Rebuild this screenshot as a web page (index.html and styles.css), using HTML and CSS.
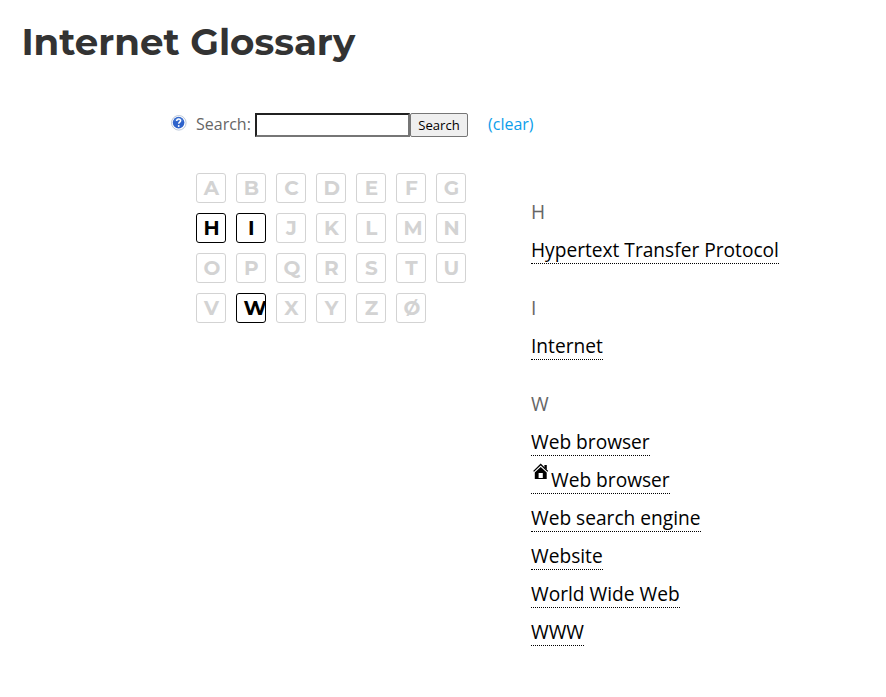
FILE: index.html
```html
<!DOCTYPE html>
<html lang="en">
<head>
    <meta charset="UTF-8">
    <meta name="viewport" content="width=device-width, initial-scale=1.0">
    <title>Internet Glossary</title>
    <link rel="stylesheet" href="styles.css">
</head>
<body>
    <h1>Internet Glossary</h1>

    <form class="search">
        <svg class="help" width="16" height="16" viewBox="0 0 16 16">
            <circle cx="7.8" cy="7.8" r="7.3" fill="#fff" stroke="#b4c2d6" stroke-width="0.9"/>
            <circle cx="7.6" cy="7.6" r="5.8" fill="#2f63cb"/>
            <path d="M3 6.3a4.8 4.8 0 0 1 9.2 0z" fill="#5d91e0" opacity="0.5"/>
            <path d="M5.7 6c.1-2.6 4-2.4 3.9-.2 0 1.4-1.8 1.4-1.9 3" fill="none" stroke="#fff" stroke-width="1.5"/>
            <circle cx="7.7" cy="11" r="0.95" fill="#fff"/>
        </svg>
        <label for="term">Search:</label>
        <input type="text" id="term">
        <button type="submit">Search</button>
        <a href="#" class="clear">(clear)</a>
    </form>

    <div class="glossary">
        <div class="letters">
            <span>A</span>
            <span>B</span>
            <span>C</span>
            <span>D</span>
            <span>E</span>
            <span>F</span>
            <span>G</span>
            <span class="active">H</span>
            <span class="active">I</span>
            <span>J</span>
            <span>K</span>
            <span>L</span>
            <span>M</span>
            <span>N</span>
            <span>O</span>
            <span>P</span>
            <span>Q</span>
            <span>R</span>
            <span>S</span>
            <span>T</span>
            <span>U</span>
            <span>V</span>
            <span class="active">W</span>
            <span>X</span>
            <span>Y</span>
            <span>Z</span>
            <span>Ø</span>
        </div>

        <div class="terms">
            <section>
                <h2>H</h2>
                <ul>
                    <li><a href="#">Hypertext Transfer Protocol</a></li>
                </ul>
            </section>
            <section>
                <h2>I</h2>
                <ul>
                    <li><a href="#">Internet</a></li>
                </ul>
            </section>
            <section>
                <h2>W</h2>
                <ul>
                    <li><a href="#">Web browser</a></li>
                    <li><a href="#"><svg class="home" width="20" height="20" viewBox="0 0 20 20"><path d="M2.6 9.4L9.7 2.5l7.1 6.9" fill="none" stroke="#000" stroke-width="1.3"/><path d="M13.4 3h2.4v4.8l-2.4-2.3z"/><path fill-rule="evenodd" d="M9.7 4.9l6 5.5V17H3.8v-6.6zM7.6 11v5h4.2v-5z"/></svg>Web browser</a></li>
                    <li><a href="#">Web search engine</a></li>
                    <li><a href="#">Website</a></li>
                    <li><a href="#">World Wide Web</a></li>
                    <li><a href="#">WWW</a></li>
                </ul>
            </section>
        </div>
    </div>
</body>
</html>
```

FILE: styles.css
```css
body {
    margin: 0;
    background-color: #fff;
    color: #666;
    font-family: "Open Sans", "Noto Sans", sans-serif;
    font-size: 16px;
}
h1 {
    margin: 0;
    padding: 18px 0 0 21.4px;
    color: #333;
    font-family: Montserrat, Inter, sans-serif;
    font-size: 37.2px;
    font-weight: 700;
    line-height: 48px;
}
.search {
    display: flex;
    align-items: center;
    height: 24px;
    margin: 47px 0 0 171px;
}
.help {
    margin: -4px 9px 0 0;
}
label {
    width: 59px;
    margin-top: -2px;
}
input {
    box-sizing: border-box;
    width: 155px;
    height: 24px;
    padding: 1px 2px;
    border: 2px inset #767676;
    background-color: #fff;
}
button {
    box-sizing: border-box;
    width: 58px;
    height: 24px;
    padding: 0;
    border: 1px solid #767676;
    border-radius: 2px;
    background-color: #efefef;
    color: #000;
    font-family: inherit;
    font-size: 13.1px;
}
.clear {
    margin: -2px 0 0 20px;
    color: #0c9eeb;
    text-decoration: none;
}
.glossary {
    display: flex;
    align-items: flex-start;
    margin: 36px 0 0 196px;
}
.letters {
    display: grid;
    grid-template-columns: repeat(7, 30px);
    gap: 10px;
}
.letters span {
    display: flex;
    justify-content: safe center;
    box-sizing: border-box;
    width: 30px;
    height: 30px;
    padding: 0 5.6px 0 6.4px;
    border: 1px solid #d3d3d3;
    border-radius: 3px;
    overflow: hidden;
    color: #d3d3d3;
    font-family: Montserrat, Inter, sans-serif;
    font-size: 20px;
    font-weight: 700;
    line-height: 29px;
}
.letters .active {
    border-color: #000;
    color: #000;
}
.terms {
    margin: 20px 0 0 65px;
    font-size: 19.15px;
    line-height: 38px;
}
section {
    margin-bottom: 20px;
}
h2 {
    margin: 0;
    font-size: 19.15px;
    font-weight: 400;
    line-height: 38px;
}
ul {
    margin: 0;
    padding: 0;
    list-style: none;
}
li {
    height: 38px;
}
li a {
    border-bottom: 1px dotted #000;
    color: #000;
    text-decoration: none;
}
.home {
    vertical-align: 5px;
}
```
